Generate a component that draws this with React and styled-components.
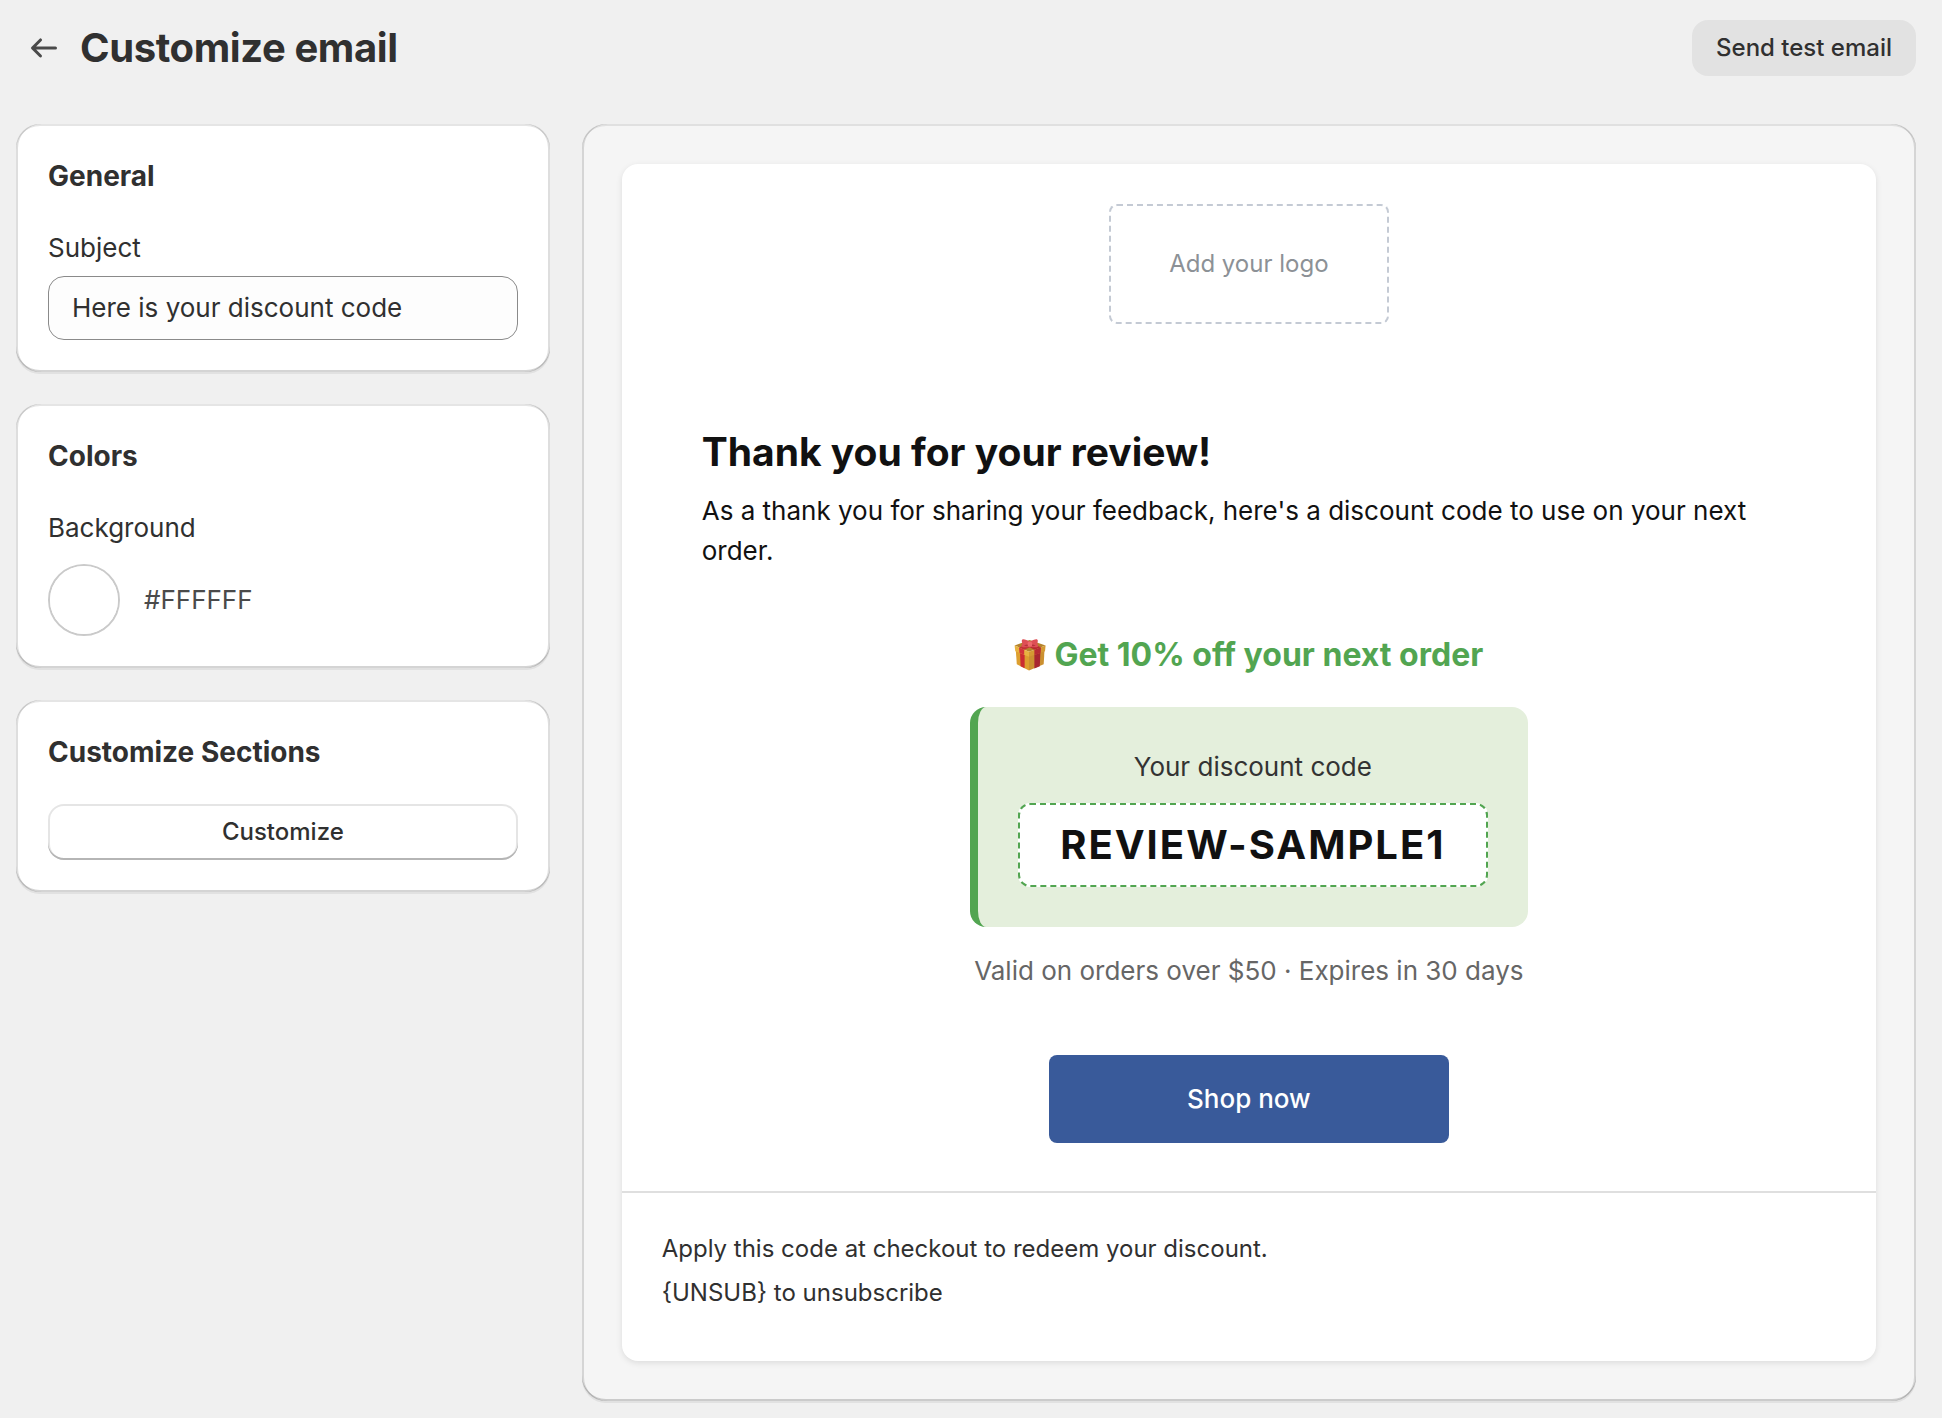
import React, { useState } from "react";
import styled, { createGlobalStyle } from "styled-components";

export default function App() {
  const [subject, setSubject] = useState("Here is your discount code");
  const [background, setBackground] = useState("#ffffff");

  return (
    <Page>
      <GlobalStyle />
      <Header>
        <BackButton type="button" aria-label="Back">
          <ArrowLeft />
        </BackButton>
        <PageTitle>Customize email</PageTitle>
        <PlainButton type="button">Send test email</PlainButton>
      </Header>
      <Columns>
        <Sidebar>
          <Card>
            <CardTitle>General</CardTitle>
            <Field $gap={8}>
              <Label htmlFor="subject">Subject</Label>
              <TextInput
                id="subject"
                type="text"
                value={subject}
                onChange={(e) => setSubject(e.target.value)}
              />
            </Field>
          </Card>
          <Card>
            <CardTitle>Colors</CardTitle>
            <Field $gap={16}>
              <Label htmlFor="background">Background</Label>
              <ColorRow>
                <ColorInput
                  id="background"
                  type="color"
                  value={background}
                  onChange={(e) => setBackground(e.target.value)}
                />
                <ColorValue>{background.toUpperCase()}</ColorValue>
              </ColorRow>
            </Field>
          </Card>
          <Card>
            <CardTitle>Customize Sections</CardTitle>
            <OutlineButton type="button">Customize</OutlineButton>
          </Card>
        </Sidebar>
        <Preview>
          <Mail style={{ backgroundColor: background }}>
            <LogoSection>
              <LogoPlaceholder>Add your logo</LogoPlaceholder>
            </LogoSection>
            <Message>
              <MessageTitle>Thank you for your review!</MessageTitle>
              <MessageText>
                As a thank you for sharing your feedback, here's a discount code
                to use on your next order.
              </MessageText>
            </Message>
            <Offer>
              <OfferTitle>
                <GiftIcon />
                Get 10% off your next order
              </OfferTitle>
              <CodeCard>
                <CodeLabel>Your discount code</CodeLabel>
                <Code>REVIEW-SAMPLE1</Code>
              </CodeCard>
              <Terms>Valid on orders over $50 · Expires in 30 days</Terms>
              <ShopLink href="#shop">Shop now</ShopLink>
            </Offer>
            <MailFooter>
              <p>Apply this code at checkout to redeem your discount.</p>
              <p>{"{UNSUB}"} to unsubscribe</p>
            </MailFooter>
          </Mail>
        </Preview>
      </Columns>
    </Page>
  );
}

function ArrowLeft() {
  return (
    <svg width="40" height="40" viewBox="0 0 20 20" fill="#4a4a4a" aria-hidden="true">
      <path
        fillRule="evenodd"
        d="M16.5 10a.75.75 0 0 1-.75.75h-9.69l2.72 2.72a.75.75 0 0 1-1.06 1.06l-4-4a.75.75 0 0 1 0-1.06l4-4a.75.75 0 1 1 1.06 1.06l-2.72 2.72h9.69a.75.75 0 0 1 .75.75Z"
      />
    </svg>
  );
}

function GiftIcon() {
  return (
    <svg width="32" height="32" viewBox="0 0 32 32" aria-hidden="true">
      {/* box */}
      <path d="M1.800 11 15 16v15.500L2.800 25.300Z" fill="#dd9f2f" />
      <path d="M30.500 11 15 16v15.500L29.700 25.300Z" fill="#cb9030" />
      <path d="M6 13.500 10.600 15.200v14L6.600 27.200Z" fill="#cb2c31" />
      <path d="M20.400 15 26.400 13l-.600 14.200-5.400 2.200Z" fill="#a82630" />
      {/* lid */}
      <path d="M.6 6.500 15.600 1 31.600 6.500 15 12.800Z" fill="#b5832c" />
      <path d="M.6 6.500 15 12.800v5L1.300 12.200Z" fill="#e8b340" />
      <path d="M31.600 6.500 15 12.800v5L31 12.200Z" fill="#d49a33" />
      <path d="M5 8.400 10.200 10.700v5.100L5.500 13.900Z" fill="#d3343a" />
      <path d="M20.400 10.800 27 8.300l-.400 5.600-6.200 2.200Z" fill="#b72b33" />
      <path d="M5 8.400 14 5l4.500 2-8.300 3.700Z" fill="#c42f36" />
      <path d="M27 8.300 18 5l-4.500 2 6.900 3.800Z" fill="#b8282f" />
      {/* bow */}
      <path
        d="M15.800 3C13 1 9.200-.3 8.200.7c-.8.900-.3 2.500.2 3.800-.7 1.200-1.300 2.700-.5 3.300 1.300.9 5.200.7 7.900-.3 2.700 1 6.700 1.200 8 .3.800-.6.100-2.100-.6-3.300.5-1.300 1-2.900.2-3.800-1-1-4.800.3-7.600 2.300Z"
        fill="#de4f55"
      />
      <path d="M10 6.800c1.300-1 2.600-1.500 3.900-1.600l.2 1.700c-1.300.4-2.700.5-4.100-.1Z" fill="#b5343b" />
      <path d="M21.700 6.800c-1.300-1-2.600-1.500-3.900-1.600l-.2 1.700c1.300.4 2.700.5 4.100-.1Z" fill="#b5343b" />
      <rect x="13.600" y="2.600" width="4.600" height="5.200" rx="2" fill="#ee686b" />
    </svg>
  );
}

const GlobalStyle = createGlobalStyle`
  *, *::before, *::after {
    box-sizing: border-box;
  }

  body {
    margin: 0;
    background: #f0f0f0;
    color: #303030;
    font-family: Inter, "Liberation Sans", sans-serif;
    font-size: 26px;
    line-height: 40px;
    -webkit-font-smoothing: antialiased;
  }

  h1, h2, h3, p {
    margin: 0;
  }

  button, input {
    font-family: inherit;
    color: inherit;
  }
`;

const Page = styled.div`
  padding: 20px 26px 18px 16px;
`;

const Header = styled.header`
  display: flex;
  align-items: center;
  gap: 16px;
  margin-bottom: 48px;
  padding-left: 8px;
`;

const BackButton = styled.button`
  display: flex;
  padding: 0;
  border: none;
  background: none;
  cursor: pointer;
`;

const PageTitle = styled.h1`
  flex: 1;
  font-size: 40px;
  font-weight: 650;
  line-height: 48px;
  letter-spacing: -0.01em;
`;

const Button = styled.button`
  height: 56px;
  padding: 0 24px 2px;
  border: none;
  border-radius: 16px;
  font-size: 24px;
  font-weight: 550;
  cursor: pointer;
`;

const PlainButton = styled(Button)`
  background: #e2e2e2;

  &:hover {
    background: #d9d9d9;
  }
`;

const OutlineButton = styled(Button)`
  background: #fff;
  box-shadow:
    inset 0 -2px 0 #b5b5b5,
    inset 0 0 0 2px rgba(0, 0, 0, 0.1);
`;

const Columns = styled.div`
  display: grid;
  grid-template-columns: minmax(0, 2fr) minmax(0, 5fr);
  align-items: start;
  gap: 32px;
`;

const Sidebar = styled.aside`
  display: grid;
  gap: 32px;
`;

const Surface = styled.section`
  border-radius: 24px;
  box-shadow:
    0 2px 0 rgba(26, 26, 26, 0.07),
    inset 2px 0 0 rgba(0, 0, 0, 0.13),
    inset -2px 0 0 rgba(0, 0, 0, 0.13),
    inset 0 -2px 0 rgba(0, 0, 0, 0.17),
    inset 0 2px 0 rgba(204, 204, 204, 0.5);
`;

const Card = styled(Surface)`
  display: flex;
  flex-direction: column;
  gap: 32px;
  padding: 32px;
  background: #fff;
`;

const CardTitle = styled.h2`
  font-size: 28px;
  font-weight: 650;
  line-height: 40px;
`;

const Field = styled.div`
  display: flex;
  flex-direction: column;
  gap: ${({ $gap }) => $gap}px;
`;

const Label = styled.label`
  display: block;
`;

const TextInput = styled.input`
  width: 100%;
  height: 64px;
  padding: 0 23px 2px;
  border: 1px solid #8a8a8a;
  border-radius: 16px;
  background: #fdfdfd;
  font-size: 26px;
`;

const ColorRow = styled.div`
  display: flex;
  align-items: center;
  gap: 24px;
`;

const ColorInput = styled.input`
  width: 72px;
  height: 72px;
  padding: 0;
  border: 2px solid #cacaca;
  border-radius: 50%;
  background: none;
  appearance: none;
  overflow: hidden;
  cursor: pointer;

  &::-webkit-color-swatch-wrapper {
    padding: 0;
  }

  &::-webkit-color-swatch {
    border: none;
  }
`;

const ColorValue = styled.span`
  color: #4a4a4a;
`;

const Preview = styled(Surface).attrs({ as: "main" })`
  padding: 40px;
  background: #f5f5f5;
`;

const Mail = styled.article`
  border-radius: 16px;
  box-shadow: 0 2px 6px rgba(0, 0, 0, 0.1);
`;

const LogoSection = styled.div`
  display: flex;
  justify-content: center;
  padding: 40px;
`;

const LogoPlaceholder = styled.div`
  display: flex;
  align-items: center;
  justify-content: center;
  width: 280px;
  height: 120px;
  border: 2px dashed #c4cad4;
  border-radius: 8px;
  color: #8c9196;
  font-size: 24px;
`;

const Message = styled.div`
  display: grid;
  gap: 15px;
  padding: 64px 80px 32px;
  color: #111;
`;

const MessageTitle = styled.h2`
  font-size: 39px;
  font-weight: 700;
  line-height: 48px;
`;

const MessageText = styled.p`
  line-height: 40px;
`;

const Offer = styled.div`
  display: flex;
  flex-direction: column;
  align-items: center;
  padding: 32px 80px 48px;
`;

const OfferTitle = styled.h3`
  display: flex;
  align-items: center;
  gap: 8px;
  margin-bottom: 32px;
  color: #52a551;
  font-size: 32px;
  font-weight: 700;
  line-height: 40px;
`;

const CodeCard = styled.div`
  display: grid;
  justify-items: center;
  gap: 16px;
  margin-bottom: 24px;
  padding: 40px;
  border-left: 8px solid #52a551;
  border-radius: 16px;
  background: #e4efdc;
`;

const CodeLabel = styled.p`
  color: #333;
`;

const Code = styled.strong`
  padding: 16px 40px;
  border: 2px dashed #52a551;
  border-radius: 12px;
  background: #fff;
  color: #111;
  font-size: 40px;
  font-weight: 700;
  line-height: 48px;
  letter-spacing: 2px;
`;

const Terms = styled.p`
  margin-bottom: 64px;
  color: #666;
`;

const ShopLink = styled.a`
  width: 400px;
  max-width: 100%;
  padding: 24px;
  border-radius: 8px;
  background: #395a9a;
  color: #fff;
  font-weight: 500;
  text-align: center;
  text-decoration: none;
`;

const MailFooter = styled.footer`
  padding: 34px 40px 46px;
  border-top: 2px solid #dfdfdf;
  font-size: 24px;
  line-height: 44px;
`;
